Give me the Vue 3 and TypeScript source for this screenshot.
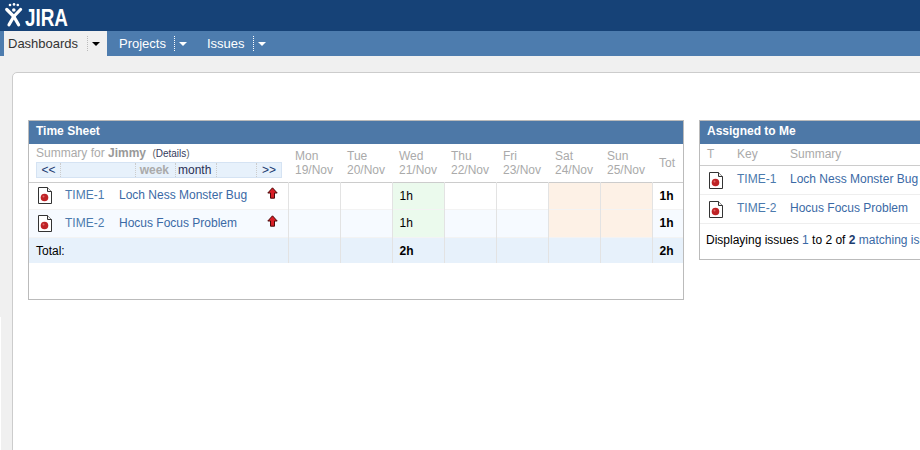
<script setup lang="ts">
interface Issue { key: string; summary: string }
const issues: Issue[] = [
  { key: 'TIME-1', summary: 'Loch Ness Monster Bug' },
  { key: 'TIME-2', summary: 'Hocus Focus Problem' },
]
const days = [
  ['Mon', '19/Nov'], ['Tue', '20/Nov'], ['Wed', '21/Nov'], ['Thu', '22/Nov'],
  ['Fri', '23/Nov'], ['Sat', '24/Nov'], ['Sun', '25/Nov'],
]
const cellClass = (i: number) => ({ today: i === 2, weekend: i >= 5 })
</script>

<template>
  <div class="page">
    <header class="top">
      <svg class="logo-mark" width="18" height="24" viewBox="0 0 18 24">
        <g fill="#fff">
          <circle cx="5" cy="2" r="1.300" /><circle cx="9" cy="1.400" r="1.300" /><circle cx="12.800" cy="2" r="1.300" />
          <circle cx="8.800" cy="7" r="1.800" />
        </g>
        <g fill="none" stroke="#fff" stroke-width="3.200" stroke-linecap="round" stroke-linejoin="round">
          <path d="M1.800 6.500 8.800 13.500 15.500 6.500" />
          <path d="M8.800 13.500 4 21.800" />
          <path d="M8.800 13.500 13.600 21.800" />
        </g>
      </svg>
      <span class="logo-text">JIRA</span>
    </header>
    <nav class="nav">
      <div class="tab active"><span class="tab-label">Dashboards</span><span class="sep"></span><span class="caret"></span></div>
      <div class="tab projects"><span class="tab-label">Projects</span><span class="sep"></span><span class="caret"></span></div>
      <div class="tab issues"><span class="tab-label">Issues</span><span class="sep"></span><span class="caret"></span></div>
    </nav>
    <main class="shell">
      <div class="panel">
        <section class="card sheet">
          <h2 class="card-title">Time Sheet</h2>
          <table class="ts">
            <thead>
              <tr>
                <th class="head-main">
                  <div class="summary-line">Summary for <b>Jimmy</b> <span class="details">(<span class="dk">Details</span>)</span></div>
                  <div class="pager">
                    <span class="pg prev">&lt;&lt;</span>
                    <span class="pg blank"></span>
                    <span class="pg week">week</span>
                    <span class="pg month">month</span>
                    <span class="pg blank2"></span>
                    <span class="pg next">&gt;&gt;</span>
                  </div>
                </th>
                <th v-for="d in days" :key="d[0]" class="day">{{ d[0] }}<br />{{ d[1] }}</th>
                <th class="tot-h">Tot</th>
              </tr>
            </thead>
            <tbody>
              <tr v-for="(it, r) in issues" :key="it.key" :class="{ alt: r === 1 }">
                <td class="issue-cell">
                  <div class="issue" :class="{ first: r === 0 }">
                    <svg class="bug" width="14" height="17" viewBox="0 0 14 17">
                      <path d="M.5.500h9l4 4v12H.5z" fill="#fff" stroke="#333" />
                      <path d="M9.500 .5v4h4" fill="#eee" stroke="#333" />
                      <circle cx="6.500" cy="10.500" r="3.800" fill="#bf2326" />
                      <circle cx="5.500" cy="9.500" r="1" fill="#e06a6a" />
                    </svg>
                    <a class="key">{{ it.key }}</a>
                    <a class="sum">{{ it.summary }}</a>
                    <svg class="prio" width="11" height="12" viewBox="0 0 11 12">
                      <path d="M5.500 .8 10.200 6H7.500v5.200h-4V6H.8z" fill="#d81e26" stroke="#4a0a0a" stroke-width="1" />
                    </svg>
                  </div>
                </td>
                <td v-for="(d, i) in days" :key="d[0]" class="cell" :class="cellClass(i)">{{ i === 2 ? '1h' : '' }}</td>
                <td class="tot">1h</td>
              </tr>
              <tr class="total">
                <td class="total-label">Total:</td>
                <td v-for="(d, i) in days" :key="d[0]" class="cell"><b v-if="i === 2">2h</b></td>
                <td class="tot">2h</td>
              </tr>
            </tbody>
          </table>
        </section>
        <section class="card assigned">
          <h2 class="card-title">Assigned to Me</h2>
          <div class="a-row a-head"><span class="c-t">T</span><span class="c-k">Key</span><span>Summary</span></div>
          <div v-for="it in issues" :key="it.key" class="a-row">
            <span class="c-t">
              <svg class="bug" width="14" height="17" viewBox="0 0 14 17">
                <path d="M.5.500h9l4 4v12H.5z" fill="#fff" stroke="#333" />
                <path d="M9.500 .5v4h4" fill="#eee" stroke="#333" />
                <circle cx="6.500" cy="10.500" r="3.800" fill="#bf2326" />
                <circle cx="5.500" cy="9.500" r="1" fill="#e06a6a" />
              </svg>
            </span>
            <a class="c-k key">{{ it.key }}</a>
            <a class="sum">{{ it.summary }}</a>
          </div>
          <p class="foot">Displaying issues <a>1</a> to 2 of <b>2</b> <a>matching issues.</a></p>
        </section>
      </div>
    </main>
  </div>
</template>

<style>
html, body { margin: 0; background: #fff; overflow: hidden; }
</style>

<style scoped>
.page {
  position: relative;
  width: 920px;
  height: 450px;
  overflow: hidden;
  font-family: "Liberation Sans", Arial, sans-serif;
  font-size: 12px;
  color: #000;
  background: #f0f0f0;
  display: flex;
  flex-direction: column;
}
.page::before {
  content: "";
  position: absolute;
  left: 0;
  top: 317px;
  bottom: 0;
  width: 1px;
  background: #fff;
}
.top {
  height: 31px;
  flex: none;
  background: #164277;
  display: flex;
  align-items: flex-start;
  padding-left: 5px;
  box-sizing: border-box;
}
.logo-mark { margin-top: 3px; flex: none; }
.logo-text {
  display: inline-block;
  color: #fff;
  font-weight: 700;
  font-size: 23px;
  line-height: 26px;
  margin-top: 5px;
  margin-left: 2px;
  transform: scaleX(0.82);
  transform-origin: left center;
}
.nav {
  height: 25px;
  flex: none;
  background: #4d7cae;
  display: flex;
  padding-left: 4px;
}
.tab {
  display: flex;
  align-items: center;
  color: #fff;
  font-size: 13px;
}
.tab.active { width: 103px; background: #f0f0f0; color: #333; padding-left: 4px; box-sizing: border-box; }
.tab.projects { margin-left: 12px; }
.tab.issues { margin-left: 20px; }
.sep { width: 0; height: 15px; margin-left: 8px; border-left: 1px dotted #fff; }
.active .sep { border-left-color: #bbb; margin-left: 9px; }
.caret { margin-left: 4px; border-style: solid; border-color: #fff transparent transparent; border-width: 4.500px 4px 0; width: 0; height: 0; }
.active .caret { border-top-color: #000; margin-left: 4px; }
.shell { flex: 1; padding: 16px 0 0 12px; min-height: 0; }
.panel {
  width: 1000px;
  height: 400px;
  box-sizing: border-box;
  background: #fff;
  border: 1px solid #ccc;
  border-radius: 5px 0 0 0;
  padding: 47px 0 0 15px;
  display: flex;
  align-items: flex-start;
  gap: 15px;
}
.card { border: 1px solid #bbb; box-sizing: border-box; background: #fff; flex: none; }
.sheet { width: 656px; height: 180px; }
.assigned { width: 260px; height: 140px; }
.card-title {
  margin: 0;
  height: 23px;
  line-height: 21px;
  padding-left: 7px;
  background: #4d78a7;
  color: #fff;
  font-size: 12px;
  font-weight: 700;
}
.ts { width: 654px; border-collapse: collapse; table-layout: fixed; }
.ts th { font-weight: 400; color: #aaa; text-align: left; padding: 0; vertical-align: middle; }
.ts thead tr { height: 38px; border-bottom: 1px solid #ccc; }
.head-main { width: 259px; padding: 0 0 0 7px !important; box-sizing: border-box; vertical-align: top !important; }
.day { width: 52px; padding-left: 7px !important; line-height: 14px; box-sizing: border-box; }
.tot-h { text-align: left; padding-left: 7px !important; }
.summary-line { line-height: 14px; margin-top: 2px; }
.summary-line b { color: #999; }
.details { margin-left: 3px; font-size: 10px; color: #666; }
.dk { color: #333a5c; }
.pager {
  width: 244px;
  height: 14px;
  margin-top: 1px;
  border: 1px solid #d5e3f3;
  background: #e7f1fb;
  display: flex;
  font-size: 12px;
  line-height: 14px;
}
.pg { box-sizing: border-box; border-right: 1px dotted #ccc; }
.prev { width: 24px; text-align: center; color: #1a3a70; }
.blank { width: 75px; }
.week { width: 40px; text-align: right; padding-right: 6px; font-weight: 700; color: #aaa; }
.month { width: 41px; padding-left: 2px; color: #2a2f55; }
.blank2 { width: 40px; }
.next { width: 24px; text-align: center; border-right: 0; color: #1a3a70; }
.ts tbody tr { height: 26px; border-bottom: 1px solid #f3f3f3; }
.ts tbody tr.alt { background: #f6faff; }
.ts tbody tr.total { height: 26px; background: #e7f1fb; border-bottom: 0; }
.ts tbody tr.total td { padding-top: 2px; box-sizing: border-box; }
.issue-cell { padding: 0; }
.issue { display: flex; align-items: center; height: 26px; padding-left: 9px; box-sizing: border-box; }
.alt .issue { height: 27px; padding-bottom: 1px; }
.issue.first { padding-bottom: 2px; }
.issue .bug { margin-top: 2px; }
.key { color: #4b7aad; }
.sum { color: #3a69a5; }
.issue .key { margin-left: 13px; width: 54px; }
.issue .sum { width: 148px; }
.prio { margin-top: -3px; }
.cell { border-left: 1px solid #e3e3e3; padding: 0 0 0 7px; }
.cell.today { background: #ebfaed; }
.cell.weekend { background: #fdf1e6; }
.tot { border-left: 1px solid #e3e3e3; padding-left: 7px; font-weight: 700; }
.total-label { padding-left: 7px; }
.a-row {
  display: flex;
  align-items: center;
  height: 28px;
  padding-left: 7px;
  border-bottom: 1px solid #eee;
  box-sizing: content-box;
}
.a-row > a, .a-row > span:not(.c-t) { margin-top: -3px; }
.a-head { height: 21px; color: #aaa; border-bottom-color: #ccc; }
.a-head > span { margin-top: -1px !important; }
.c-t { width: 30px; display: flex; }
.c-k { width: 53px; }
.a-row .bug { margin-left: 2px; margin-top: 0; }
.foot { margin: 0; padding: 9px 0 0 6px; white-space: nowrap; line-height: 14px; overflow: hidden; }
.foot a { color: #3a69a5; }
.foot b { color: #1c3d6e; }
</style>
